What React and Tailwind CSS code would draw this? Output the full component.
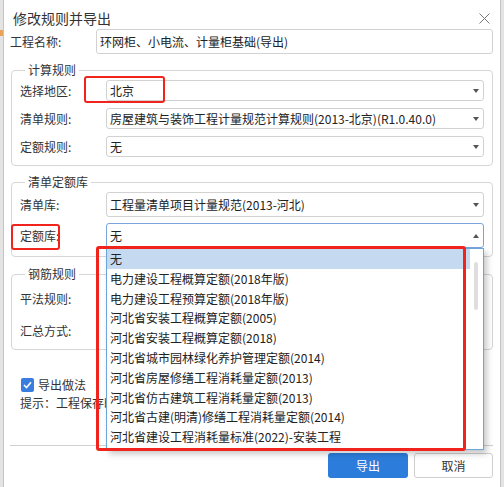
import React from 'react';

const font = "font-['Noto_Sans_CJK_SC','Noto_Sans',sans-serif]";

const Arrow = ({ up = false }) => (
  <svg width="6" height="4" viewBox="0 0 6 4" className="shrink-0">
    {up ? <path d="M0 4 L3 0 L6 4 Z" fill="#555" /> : <path d="M0 0 L6 0 L3 4 Z" fill="#555" />}
  </svg>
);

const Select = ({ value, height = 'h-[25px]', open = false }) => (
  <div
    className={`flex-1 ${height} flex items-center pl-[3px] pr-[4px] bg-white rounded-[3px] border ${
      open ? 'border-[#7ba3dc]' : 'border-[#d2d2d2]'
    }`}
  >
    <span className="flex-1 truncate text-[#222]">{value}</span>
    <Arrow up={open} />
  </div>
);

const Row = ({ label, children }) => (
  <div className="flex items-center">
    <span className="w-[86px] shrink-0 text-[#333]">{label}</span>
    {children}
  </div>
);

const Group = ({ title, className = '', children }) => (
  <fieldset className={`ml-[1px] border border-[#d6d6d6] rounded-[4px] pl-[8px] pr-[8px] ${className}`}>
    <legend className="ml-[5px] px-[3px] leading-[16px] text-[#333]">{title}</legend>
    {children}
  </fieldset>
);

const quotaLibs = [
  '无',
  '电力建设工程概算定额(2018年版)',
  '电力建设工程预算定额(2018年版)',
  '河北省安装工程概算定额(2005)',
  '河北省安装工程概算定额(2018)',
  '河北省城市园林绿化养护管理定额(2014)',
  '河北省房屋修缮工程消耗量定额(2013)',
  '河北省仿古建筑工程消耗量定额(2013)',
  '河北省古建(明清)修缮工程消耗量定额(2014)',
  '河北省建设工程消耗量标准(2022)-安装工程',
];

export default function App() {
  return (
    <div className={`relative w-[504px] h-[487px] overflow-hidden bg-[#e4e4e4] flex text-[12px] ${font}`}>
      {/* window behind the dialog */}
      <div className="w-[3px] flex flex-col">
        <div className="h-[30px]" />
        <div className="h-[6px] bg-[#e9a25a]" />
      </div>

      <div className="relative w-[498px] h-full bg-white border-x border-[#c4c4c4] flex flex-col pl-[6px] pr-[7px]">
        {/* title bar */}
        <div className="h-[29px] flex items-start pt-[8px]">
          <span className="flex-1 pl-[3px] text-[14px] leading-[20px] text-[#333]">修改规则并导出</span>
          <svg width="11" height="11" viewBox="0 0 11 11" className="mt-[5px] mr-[3px]">
            <path d="M0.5 0.5 L10.5 10.5 M10.5 0.5 L0.5 10.5" stroke="#777" strokeWidth="1" />
          </svg>
        </div>

        <Row label="工程名称:">
          <div className="flex-1 h-[25px] flex items-center pl-[3px] border border-[#d2d2d2] rounded-[3px] text-[#222]">
            环网柜、小电流、计量柜基础(导出)
          </div>
        </Row>

        <Group title="计算规则" className="mt-[8px] pt-[2px] pb-[8px]">
          <div className="flex flex-col gap-[7px]">
            <Row label="选择地区:">
              <Select value="北京" height="h-[21px]" />
            </Row>
            <Row label="清单规则:">
              <Select value="房屋建筑与装饰工程计量规范计算规则(2013-北京)(R1.0.40.0)" height="h-[21px]" />
            </Row>
            <Row label="定额规则:">
              <Select value="无" height="h-[21px]" />
            </Row>
          </div>
        </Group>

        <Group title="清单定额库" className="mt-[8px] pt-[2px] pb-[8px]">
          <div className="flex flex-col gap-[6px]">
            <Row label="清单库:">
              <Select value="工程量清单项目计量规范(2013-河北)" />
            </Row>
            <Row label="定额库:">
              <Select value="无" open />
            </Row>
          </div>
        </Group>

        <Group title="钢筋规则" className="mt-[9px] pt-[4px] pb-[6px]">
          <div className="flex flex-col gap-[7px]">
            <Row label="平法规则:">
              <Select value="" />
            </Row>
            <Row label="汇总方式:">
              <Select value="" />
            </Row>
          </div>
        </Group>

        <div className="mt-[27px] h-[16px] pl-[11px] flex items-center gap-[4px]">
          <span className="w-[13px] h-[14px] rounded-[2px] bg-[#3a7de0] flex items-center justify-center">
            <svg width="9" height="8" viewBox="0 0 9 8">
              <path d="M1 4 L3.5 6.5 L8 1.2" stroke="#fff" strokeWidth="1.6" fill="none" />
            </svg>
          </span>
          <span className="text-[#333]">导出做法</span>
        </div>
        {/* the hint runs on under the open list, so it is cut at the list's edge */}
        <div className="mt-[2px] ml-[10px] w-[86px] h-[16px] overflow-hidden whitespace-nowrap leading-[16px] text-[#333]">
          提示：工程保存时将同步导出
        </div>

        <div className="mt-[34px] border-t border-[#d0d0d0]" />

        <div className="mt-[7px] flex justify-end gap-[6px]">
          <button className="w-[80px] h-[25px] rounded-[3px] bg-[#2c7ddb] text-white">导出</button>
          <button className="w-[79px] h-[25px] rounded-[3px] bg-white border border-[#cfcfcf] text-[#333]">取消</button>
        </div>
      </div>

      {/* open dropdown of 定额库 */}
      <div className="absolute left-[106px] top-[248px] w-[378px] h-[202px] bg-white border border-[#6aa6dc] shadow-[3px_4px_6px_rgba(0,0,0,0.22)] flex">
        <ul className="w-[363px]">
          {quotaLibs.map((name, i) => (
            <li
              key={name}
              className={`h-[19.8px] leading-[19.8px] pl-[3px] text-[#222] whitespace-nowrap ${i === 0 ? 'bg-[#c5daf1]' : ''}`}
            >
              {name}
            </li>
          ))}
        </ul>
        <div className="flex-1 pl-[4px] pt-[13px]">
          <div className="w-[4px] h-[48px] rounded-full bg-[#dedede]" />
        </div>
      </div>

      {/* red highlight frames */}
      <div className="absolute left-[84px] top-[76px] w-[81px] h-[27px] border-[2.5px] border-[#f0241c] rounded-[3px]" />
      <div className="absolute left-[11px] top-[224px] w-[49px] h-[26px] border-[2.5px] border-[#f0241c] rounded-[3px]" />
      <div className="absolute left-[96px] top-[246px] w-[370px] h-[205px] border-[3px] border-[#f0241c] rounded-[3px]" />
    </div>
  );
}
